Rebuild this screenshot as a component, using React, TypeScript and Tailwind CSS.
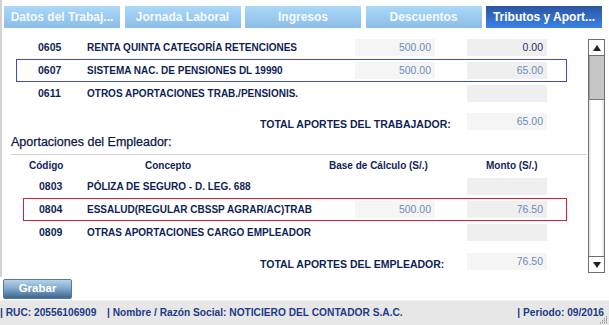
import React from "react";

type Row = {
  code: string;
  concept: string;
  base?: string;
  monto: string;
  dark?: boolean;
  frame?: "blue" | "red";
};

const trabajador: Row[] = [
  { code: "0605", concept: "RENTA QUINTA CATEGORÍA RETENCIONES", base: "500.00", monto: "0.00", dark: true },
  { code: "0607", concept: "SISTEMA NAC. DE PENSIONES DL 19990", base: "500.00", monto: "65.00", frame: "blue" },
  { code: "0611", concept: "OTROS APORTACIONES TRAB./PENSIONIS.", monto: "" },
];

const empleador: Row[] = [
  { code: "0803", concept: "PÓLIZA DE SEGURO - D. LEG. 688", monto: "" },
  { code: "0804", concept: "ESSALUD(REGULAR CBSSP AGRAR/AC)TRAB", base: "500.00", monto: "76.50", frame: "red" },
  { code: "0809", concept: "OTRAS APORTACIONES CARGO EMPLEADOR", monto: "" },
];

const tabs = ["Datos del Trabaj...", "Jornada Laboral", "Ingresos", "Descuentos", "Tributos y Aport..."];

function Box({ value, dark, light }: { value?: string; dark?: boolean; light?: boolean }) {
  return (
    <div
      className={`w-[80px] h-[17px] shrink-0 pr-[4px] text-right text-[10.5px] leading-[17px] ${
        light ? "bg-[#f5f5f5]" : "bg-[#efefef]"
      } ${dark ? "text-[#1b2f66]" : "text-[#6e8bb6]"}`}
    >
      {value}
    </div>
  );
}

function DataRow({ row, kind }: { row: Row; kind: "t" | "e" }) {
  const frame =
    row.frame === "blue"
      ? "border-[#3f4cc4]"
      : row.frame === "red"
      ? "border-[#d8202e]"
      : "border-transparent";
  return (
    <div
      className={`flex h-[23px] items-center border ${frame} ${
        kind === "t" ? "ml-[14px] w-[551px]" : "ml-[21px] w-[544px]"
      }`}
    >
      <span
        className={`shrink-0 text-[10.5px] font-bold text-[#0f1f55] ${
          kind === "t" ? "w-[70px] pl-[21px]" : "w-[63px] pl-[15px]"
        }`}
      >
        {row.code}
      </span>
      <span className="flex-1 text-[10px] font-bold text-[#0f1f55] whitespace-nowrap">{row.concept}</span>
      {row.base ? <Box value={row.base} light /> : <div className="w-[80px] shrink-0" />}
      <div className="w-[32px] shrink-0" />
      <Box value={row.monto} dark={row.dark} />
      <div className="w-[19px] shrink-0" />
    </div>
  );
}

function Total({ label, value }: { label: string; value: string }) {
  return (
    <div className="flex ml-[258px] h-[18px]">
      <span className="w-[207px] mt-[5px] text-[10.5px] leading-[13px] font-bold text-[#0f1f55] whitespace-nowrap">
        {label}
      </span>
      <Box value={value} light />
    </div>
  );
}

function Arrow({ up }: { up?: boolean }) {
  return (
    <svg width="8" height="6" viewBox="0 0 8 6">
      <polygon points={up ? "4,0 8,6 0,6" : "0,0 8,0 4,6"} fill="#222" />
    </svg>
  );
}

function Scrollbar() {
  return (
    <div className="mt-[11px] ml-[1px] flex h-[234px] w-[17px] shrink-0 flex-col border border-[#6f6f6f] bg-[#ebebeb]">
      <div className="flex h-[16px] items-center justify-center border-b border-[#6f6f6f] bg-white">
        <Arrow up />
      </div>
      <div className="h-[44px] border-b border-[#7a7a7a] border-l border-l-[#999] bg-[#c6c6c6]" />
      <div className="mx-[2px] flex-1 bg-white" />
      <div className="flex h-[16px] items-center justify-center border-t border-[#6f6f6f] bg-white">
        <Arrow />
      </div>
    </div>
  );
}

export default function App() {
  return (
    <div className="w-[609px] h-[325px] overflow-hidden bg-white font-['Liberation_Sans',Arial,sans-serif] flex flex-col">
      {/* Panel */}
      <div className="h-[277px] border-l-2 border-[#d2d2d2] flex flex-col">
        <div className="flex gap-[4.5px] ml-[2px] mt-[6px]">
          {tabs.map((t, i) => {
            const active = i === tabs.length - 1;
            return (
              <div
                key={t}
                className={`w-[116px] h-[22px] flex items-center justify-center text-[12px] font-bold whitespace-nowrap ${
                  active
                    ? "bg-gradient-to-b from-[#2b56a0] to-[#3b82ea] text-white"
                    : "bg-gradient-to-b from-[#aad8f7] to-[#8bbde8] text-[#f6fafd]"
                }`}
              >
                {t}
              </div>
            );
          })}
        </div>

        <div className="flex">
          <div className="w-[585px] shrink-0 flex flex-col pt-[8px]">
            {trabajador.map((r) => (
              <DataRow key={r.code} row={r} kind="t" />
            ))}
            <div className="mt-[8px]">
              <Total label="TOTAL APORTES DEL TRABAJADOR:" value="65.00" />
            </div>

            <div className="ml-[9px] mt-[4px] pb-[5px] border-b border-[#d0d0d0] text-[12.5px] leading-[14px] text-[#0a1748] [-webkit-text-stroke:0.25px_#0a1748]">
              Aportaciones del Empleador:
            </div>

            <div className="flex ml-[27px] mt-[4px] text-[10px] leading-[13px] font-bold text-[#13235a] whitespace-nowrap">
              <span className="w-[116px]">Código</span>
              <span className="w-[184px]">Concepto</span>
              <span className="w-[157px]">Base de Cálculo (S/.)</span>
              <span>Monto (S/.)</span>
            </div>

            <div className="mt-[3px]">
              {empleador.map((r) => (
                <DataRow key={r.code} row={r} kind="e" />
              ))}
            </div>
            <div className="mt-[9px]">
              <Total label="TOTAL APORTES DEL EMPLEADOR:" value="76.50" />
            </div>
          </div>
          <Scrollbar />
        </div>
      </div>

      {/* Grabar */}
      <div className="mt-[2px] ml-[3px] h-[21px]">
        <div className="w-[69px] h-[20px] rounded-[2px] border border-[#56789a] bg-gradient-to-b from-[#b6d2e8] via-[#7ea6ca] to-[#3c6591] flex items-center justify-center text-[11.5px] font-bold text-white">
          Grabar
        </div>
      </div>

      {/* Footer */}
      <div className="relative flex-1 bg-[#e7e7e7] border-t border-[#f2f2f2] flex items-center justify-between pr-[5px] text-[10.2px] font-bold text-[#1c3a86] whitespace-nowrap">
        <div className="flex">
          <span className="w-[107px]">| RUC: 20556106909</span>
          <span>| Nombre / Razón Social: NOTICIERO DEL CONTADOR S.A.C.</span>
        </div>
        <span>| Periodo: 09/2016</span>
        <svg className="absolute right-[1px] bottom-[1px]" width="8" height="8" viewBox="0 0 8 8">
          {[
            [6, 0], [6, 2], [6, 4], [6, 6], [4, 2], [4, 4], [4, 6], [2, 4], [2, 6], [0, 6],
          ].map(([x, y], i) => (
            <rect key={i} x={x} y={y} width="1" height="1.5" fill="#9a9a9a" />
          ))}
        </svg>
      </div>
    </div>
  );
}
